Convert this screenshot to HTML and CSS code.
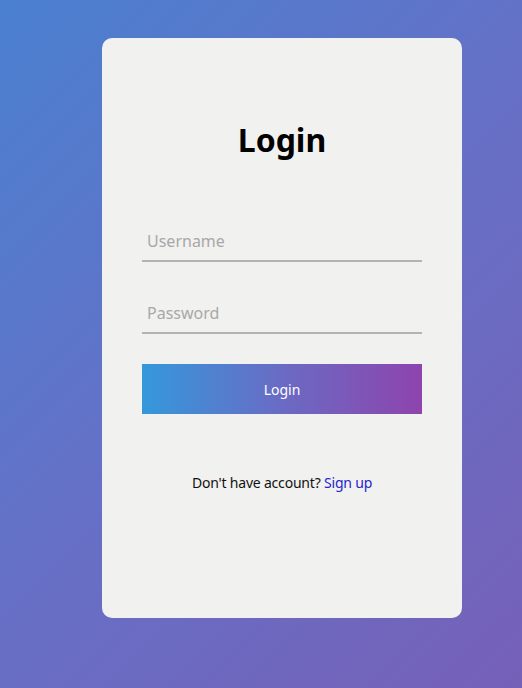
FILE: index.html
```html
<!DOCTYPE html>
<html lang="en">
<head>
<meta charset="utf-8">
<title>Login</title>
<link rel="stylesheet" href="styles.css">
</head>
<body>
<main class="page">
  <form class="card">
    <h1 class="title">Login</h1>
    <div class="fields">
      <input class="field" type="text" placeholder="Username">
      <input class="field" type="password" placeholder="Password">
    </div>
    <button class="btn" type="button">Login</button>
    <p class="footer">Don't have account? <a class="link" href="#">Sign up</a></p>
  </form>
</main>
</body>
</html>
```
FILE: styles.css
```css
html, body {
  margin: 0;
  height: 100%;
}
body {
  background: linear-gradient(135deg, #4a80d0 0%, #6670c6 50%, #7660b8 100%);
  font-family: "Segoe UI", "Noto Sans", "Open Sans", sans-serif;
}
.page {
  box-sizing: border-box;
  height: 688px;
  padding: 38px 0 0 102px;
}
.card {
  box-sizing: border-box;
  width: 360px;
  height: 580px;
  background: #f1f1ef;
  border-radius: 10px;
  padding: 81px 40px 0;
  display: flex;
  flex-direction: column;
}
.title {
  margin: 0;
  font-size: 32px;
  line-height: 42px;
  font-weight: 700;
  text-align: center;
  color: #000;
}
.fields {
  margin-top: 61px;
  display: flex;
  flex-direction: column;
  gap: 32px;
}
.field {
  box-sizing: border-box;
  height: 40px;
  width: 100%;
  border: none;
  border-bottom: 2px solid #b3b3b3;
  background: transparent;
  padding: 0 5px;
  font-family: inherit;
  font-size: 16px;
  outline: none;
}
.field::placeholder {
  color: #a8a8a8;
}
.btn {
  margin-top: 30px;
  height: 50px;
  border: none;
  background: linear-gradient(90deg, #3498db 0%, #6a6bc4 50%, #8e44ad 100%);
  color: #fff;
  font-family: inherit;
  font-size: 14px;
}
.footer {
  margin: 60px 0 0;
  text-align: center;
  font-size: 14px;
  line-height: 18px;
  color: #111;
  letter-spacing: -0.2px;
}
.link {
  color: #2525d0;
  text-decoration: none;
}
```
